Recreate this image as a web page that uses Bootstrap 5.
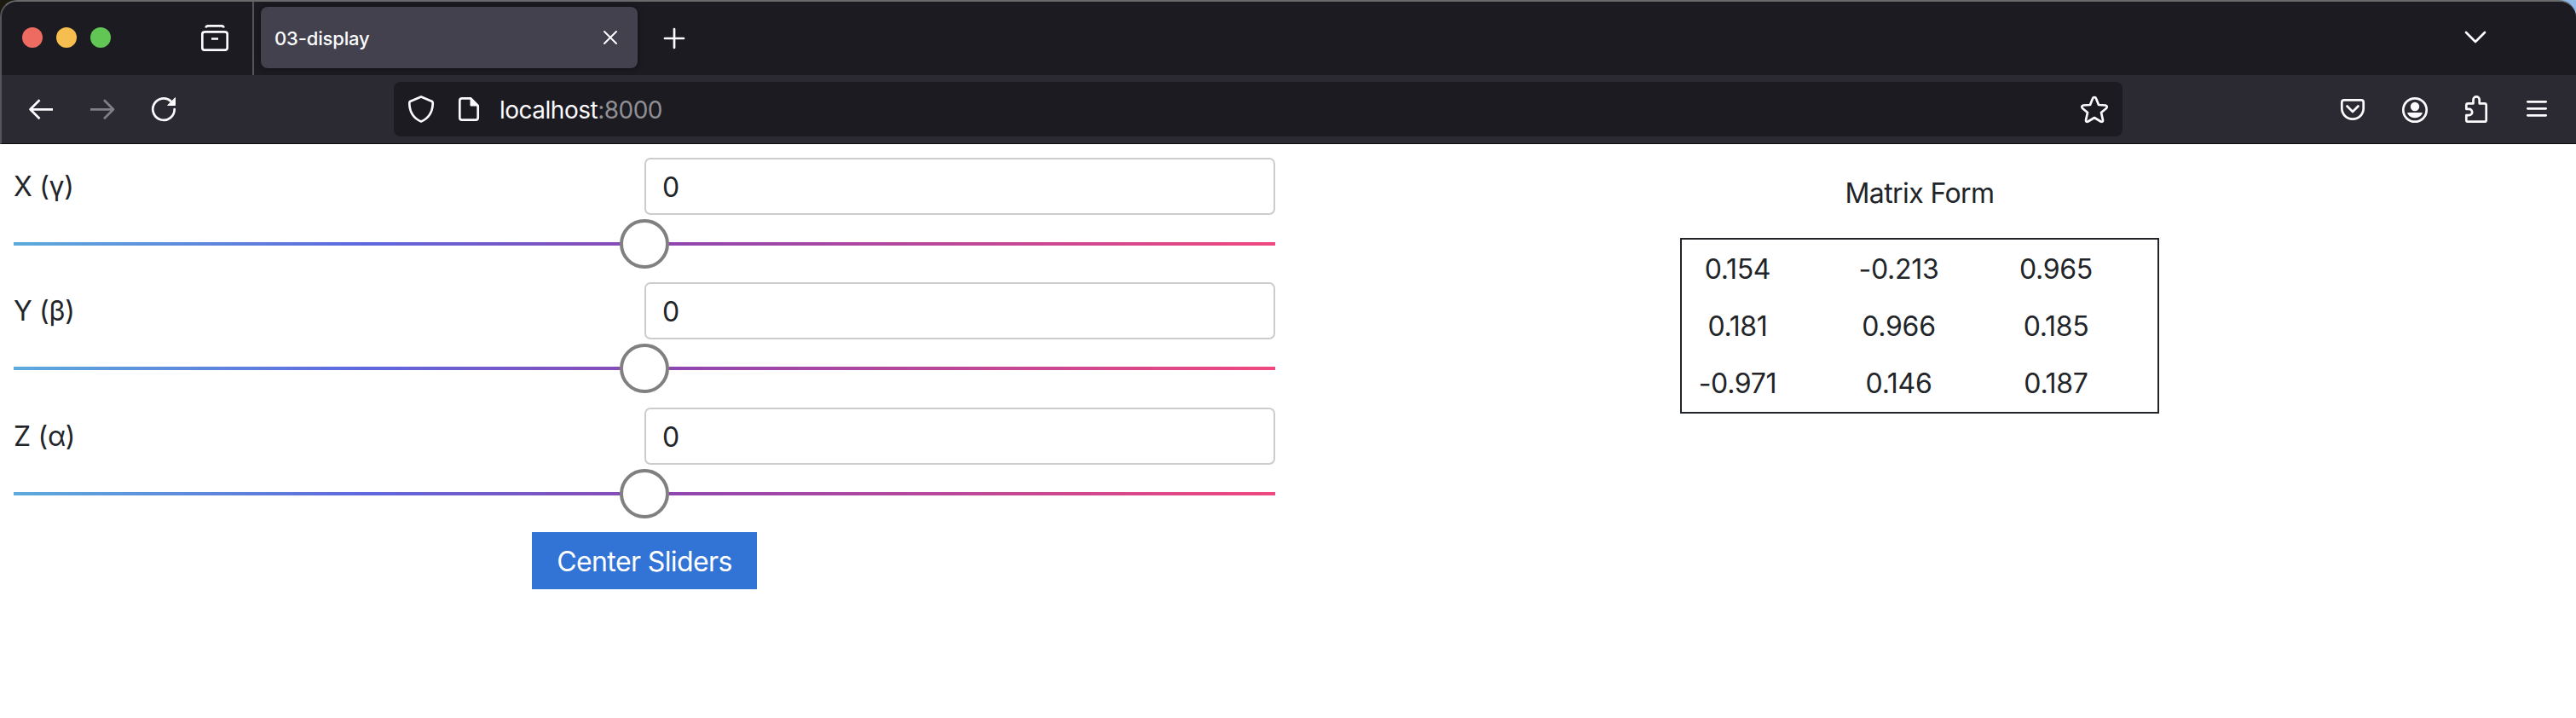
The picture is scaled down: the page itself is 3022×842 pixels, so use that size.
<!DOCTYPE html>
<html lang="en">
<head>
<meta charset="utf-8">
<title>03-display</title>
<link href="https://cdn.jsdelivr.net/npm/bootstrap@5.3.0/dist/css/bootstrap.min.css" rel="stylesheet">
<style>
body{font-family:Inter,"Liberation Sans",sans-serif;font-size:32px;line-height:48px;color:#212529;background:#fff;overflow:hidden}
svg{display:block;flex:none;fill:none;stroke:#fbfbfe;stroke-width:2.7;stroke-linecap:round;stroke-linejoin:round}
.desktop{background:linear-gradient(90deg,#1c1a10 50%,#8fb9e6 50%)}
.chrome{height:169px;background:#2b2a33;border-top:2px solid #68696b;border-left:2px solid #55545b;border-bottom:1px solid #0c0c0d;border-radius:20px 20px 0 0;overflow:hidden}
.tabs{height:86px;background:#1c1b22}
.light{width:24px;height:24px;border-radius:50%}
.light-red{background:#ed6b60}
.light-yellow{background:#f5be4f}
.light-green{background:#62c655}
.lights{padding-left:24px;gap:16px;width:234px;height:84px}
.tabrule{width:2px;background:#55545b;margin-left:28px}
.tab-on{width:442px;height:72px;margin:6px 0 0 8px;padding:0 14px 0 16px;border-radius:8px;background:#42414d;box-shadow:0 0 6px rgba(0,0,0,.5);color:#fbfbfe;font-size:22px;font-weight:500;letter-spacing:-.15px}
.tab-on span{padding-top:2px}
.view-icon{margin-top:26px}
.plus-icon{margin:30px 0 0 30px}
.list-icon{margin:31px 104px 0 0}
.tools{height:80px;padding-left:28px}
.fwd-icon{margin-left:37px;stroke:#807f85}
.reload-icon{margin-left:35px}
.page-icon{margin-left:26px}
.urlbar{width:2028px;height:64px;background:#1c1b22;border-radius:8px;margin-left:252px;padding:0 16px;color:#fbfbfe;font-size:28px;letter-spacing:-.5px}
.address{margin-left:22px;padding-top:2px}
.port{color:#8f8f94}
.actions{gap:36px;padding-right:28px}
.pane{width:1480px;margin-left:16px;padding-top:16px}
.axis-label{padding-top:10px;letter-spacing:-.3px}
.num{height:67px;border:2px solid #ccc;border-radius:7px;padding:2px 20px 0 19px;font-size:32px;color:#212529;background:#fff}
.axis{height:146.4px}
.slide{appearance:none;display:block;width:100%;height:58px;margin:5px 0 0;background:linear-gradient(90deg,#5dabdc,#5f68de 28%,#8f47b0 52%,#ef487f) center/100% 4px no-repeat}
.slide::-webkit-slider-thumb{appearance:none;width:58px;height:58px;border:4px solid #808080;border-radius:50%;background:#fff}
.center-btn{height:67px;width:264px;border:0;border-radius:0;background:#3273d6;color:#fff;font-size:32px;padding:2px 0 0;letter-spacing:-.6px}
.matrix{width:562px;height:206px;border:2px solid #212529;display:grid;grid-template-columns:131px 247px 122px;grid-template-rows:repeat(3,67px);align-items:center;text-align:center;letter-spacing:-.3px}
.matrix span{padding-top:2px}
.right{width:1480px;padding-top:34px;margin-left:16px}
.matrix-title{margin-bottom:28px;letter-spacing:-.6px}
</style>
</head>
<body>
<div class="desktop">
<header class="chrome">
 <div class="tabs d-flex">
  <div class="lights d-flex align-items-center"><span class="light light-red"></span><span class="light light-yellow"></span><span class="light light-green"></span></div>
  <svg class="view-icon" width="32" height="32" viewBox="0 0 32 32"><path d="M5.500 4.500Q6 2.400 8 2.400H24Q26 2.400 26.500 4.500M5 9.300H27Q30.700 9.300 30.700 12V28Q30.700 30.700 28 30.700H4Q1.300 30.700 1.300 28V12Q1.300 9.300 5 9.300ZM12 17.500H20" stroke-linecap="butt"/></svg>
  <div class="tabrule"></div>
  <div class="tab-on d-flex align-items-center justify-content-between"><span>03-display</span><svg width="36" height="36" viewBox="0 0 36 36" stroke-width="2"><path d="M11 11L25 25M25 11L11 25" stroke-width="2"/></svg></div>
  <svg class="plus-icon" width="26" height="26" viewBox="0 0 26 26"><path d="M13 2V24M2 13H24"/></svg>
  <svg class="list-icon ms-auto" width="28" height="20" viewBox="0 0 28 20"><path d="M3 5L14 16L25 5"/></svg>
 </div>
 <div class="tools d-flex align-items-center">
  <svg width="36" height="36" viewBox="0 0 36 36"><path d="M32 18.300H6M16.500 7.300L5.500 18.300L16.500 29.300" stroke-linecap="butt"/></svg>
  <svg class="fwd-icon" width="36" height="36" viewBox="0 0 36 36"><path d="M3 18.300H30M19 7.300L30 18.300L19 29.300" stroke-linecap="butt"/></svg>
  <svg class="reload-icon" width="36" height="36" viewBox="0 0 36 36"><path d="M30.700 18A12.700 12.700 0 1 1 26.500 8.700"/><path d="M31.500 5V13.500H23Z" fill="#fbfbfe" stroke-width="1"/></svg>
  <div class="urlbar d-flex align-items-center">
   <svg width="32" height="36" viewBox="0 0 32 36"><path d="M16 3.500L29 9Q30 10 29.700 12Q29 27 16 32.500Q3 27 2.300 12Q2 10 3 9Z"/></svg>
   <svg class="page-icon" width="28" height="32" viewBox="0 0 28 32"><path d="M16 3.300H6Q3.300 3.300 3.300 6V26Q3.300 28.700 6 28.700H22Q24.700 28.700 24.700 26V12Z"/><path d="M16 3V12H25Z" fill="#fbfbfe" stroke-width="1"/></svg>
   <span class="address">localhost<span class="port">:8000</span></span>
   <svg class="ms-auto" width="34" height="36" viewBox="0 0 34 36"><path d="M17 4Q18.500 4 19 5.500L22 13L30 13.500Q33 14.500 31 17L25 22L27 31Q27 33.500 24.500 32.500L17 28L9.500 32.500Q7 33.500 7 31L9 22L3 17Q1 14.500 4 13.500L12 13L15 5.500Q15.500 4 17 4Z"/></svg>
  </div>
  <div class="actions d-flex align-items-center ms-auto">
   <svg width="36" height="36" viewBox="0 0 36 36"><path d="M8 7.300H28Q30.700 7.300 30.700 10V17A12.700 12.700 0 0 1 5.300 17V10Q5.300 7.300 8 7.300ZM11.500 14.500L18 21L24.500 14.500"/></svg>
   <svg width="36" height="36" viewBox="0 0 36 36"><circle cx="19" cy="19" r="13.700"/><circle cx="19" cy="15" r="5.200" fill="#fbfbfe" stroke="none"/><path d="M11 22H27Q28.500 22 27.500 23.500Q24.500 28.300 19 28.300T10.500 23.500Q9.500 22 11 22Z" fill="#fbfbfe" stroke="none"/></svg>
   <svg width="36" height="36" viewBox="0 0 36 36"><path d="M7.300 17.800V13.300Q7.300 11.300 9.300 11.300H15.500V7A3.600 3.600 0 0 1 22.700 7V11.300H28.700Q30.700 11.300 30.700 13.300V30.700Q30.700 32.700 28.700 32.700H9.300Q7.300 32.700 7.300 30.700V25.200H10.500A3.700 3.700 0 0 0 10.500 17.800Z"/></svg>
   <svg width="36" height="36" viewBox="0 0 36 36"><path d="M7.300 9.300H28.700M7.300 17.300H28.700M7.300 25.300H28.700"/></svg>
  </div>
 </div>
</header>
</div>
<main class="d-flex">
 <section class="pane">
  <div class="axis"><div class="row g-0"><label class="axis-label col-6">X (γ)</label><div class="col-6"><input class="num w-100 d-block" value="0"></div></div><input class="slide" type="range" min="-180" max="180" value="0"></div>
  <div class="axis"><div class="row g-0"><label class="axis-label col-6">Y (β)</label><div class="col-6"><input class="num w-100 d-block" value="0"></div></div><input class="slide" type="range" min="-180" max="180" value="0"></div>
  <div class="axis"><div class="row g-0"><label class="axis-label col-6">Z (α)</label><div class="col-6"><input class="num w-100 d-block" value="0"></div></div><input class="slide" type="range" min="-180" max="180" value="0"></div>
  <div class="text-center"><button class="btn center-btn">Center Sliders</button></div>
 </section>
 <section class="right d-flex flex-column align-items-center">
  <div class="matrix-title">Matrix Form</div>
  <div class="matrix"><span>0.154</span><span>-0.213</span><span>0.965</span><span>0.181</span><span>0.966</span><span>0.185</span><span>-0.971</span><span>0.146</span><span>0.187</span></div>
 </section>
</main>
<script src="https://cdn.jsdelivr.net/npm/bootstrap@5.3.0/dist/js/bootstrap.bundle.min.js"></script>
</body>
</html>
